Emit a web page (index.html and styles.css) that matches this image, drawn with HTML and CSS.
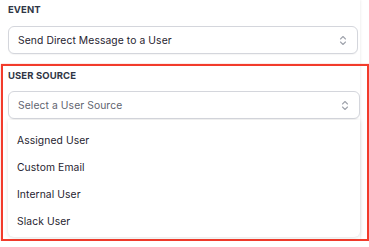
FILE: index.html
```html
<!DOCTYPE html>
<html lang="en">
<head>
    <meta charset="UTF-8">
    <meta name="viewport" content="width=device-width, initial-scale=1.0">
    <title>Workflow Step</title>
    <link rel="stylesheet" href="styles.css">
</head>
<body>
    <div class="panel">
        <div class="field field-event">
            <div class="field-label">Event</div>
            <div class="select">
                <span class="select-value">Send Direct Message to a User</span>
                <svg class="chevrons" width="8" height="11" viewBox="0 0 8 11">
                    <path d="M1.5 4 L4 1.5 L6.5 4 M1.5 7 L4 9.5 L6.5 7" fill="none" stroke="#a0a4ad" stroke-width="1.1" stroke-linecap="round" stroke-linejoin="round"/>
                </svg>
            </div>
        </div>

        <div class="field field-highlight">
            <div class="field-label">User Source</div>
            <div class="select">
                <span class="select-value placeholder">Select a User Source</span>
                <svg class="chevrons" width="8" height="11" viewBox="0 0 8 11">
                    <path d="M1.5 4 L4 1.5 L6.5 4 M1.5 7 L4 9.5 L6.5 7" fill="none" stroke="#a0a4ad" stroke-width="1.1" stroke-linecap="round" stroke-linejoin="round"/>
                </svg>
            </div>
            <ul class="options">
                <li>Assigned User</li>
                <li>Custom Email</li>
                <li>Internal User</li>
                <li>Slack User</li>
            </ul>
        </div>
    </div>
</body>
</html>
```

FILE: styles.css
```css
body {
    font-family: 'Inter', 'Liberation Sans', sans-serif;
    background-color: #fff;
    color: #1f2430;
    margin: 0;
    padding: 0;
}

.panel {
    width: 360px;
    box-shadow: 1px 0 2px rgba(0, 0, 0, 0.06);
}

.field-event {
    padding: 4px 2px 10px 8px;
}

.field-label {
    font-size: 9.5px;
    font-weight: 700;
    letter-spacing: 0.1px;
    text-transform: uppercase;
    color: #2f3645;
    line-height: 12px;
    margin-bottom: 10px;
}

.select {
    height: 28px;
    box-sizing: border-box;
    border: 1px solid #d4d6dc;
    border-radius: 6px;
    display: flex;
    align-items: center;
    justify-content: space-between;
    padding: 0 10px 0 9px;
    background-color: #fff;
    box-shadow: 0 1px 1px rgba(0, 0, 0, 0.04);
}

.select-value {
    font-size: 10.3px;
    letter-spacing: 0.1px;
    color: #1f2430;
}

.select-value.placeholder {
    color: #5f6470;
}

.field-highlight {
    width: 352px;
    margin-left: 1px;
    border: 2px solid #f23b2b;
    padding: 4px 7px 2px 5px;
    box-shadow: 0 0 1px rgba(242, 59, 43, 0.6);
}

.field-highlight .field-label {
    margin-bottom: 9px;
}

.options {
    list-style: none;
    margin: 1px 0 0 0;
    padding: 7px 0 2px 0;
    background-color: #fff;
    border-radius: 0 0 6px 6px;
    box-shadow: 0 1px 4px rgba(0, 0, 0, 0.12);
}

.options li {
    height: 27px;
    line-height: 27px;
    padding-left: 9px;
    font-size: 10.3px;
    letter-spacing: 0.1px;
    color: #1f2430;
}
```
